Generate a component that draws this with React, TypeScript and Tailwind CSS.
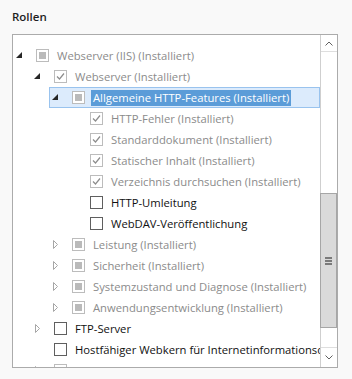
import React from "react";

type Check = "ind" | "checked" | "none";

type Item = {
  label: string;
  level: number;
  expander?: "open" | "closed";
  check: Check;
  installed: boolean;
  selected?: boolean;
};

const items: Item[] = [
  { label: "Webserver (IIS) (Installiert)", level: 0, expander: "open", check: "ind", installed: true },
  { label: "Webserver (Installiert)", level: 1, expander: "open", check: "checked", installed: true },
  { label: "Allgemeine HTTP-Features (Installiert)", level: 2, expander: "open", check: "ind", installed: true, selected: true },
  { label: "HTTP-Fehler (Installiert)", level: 3, check: "checked", installed: true },
  { label: "Standarddokument (Installiert)", level: 3, check: "checked", installed: true },
  { label: "Statischer Inhalt (Installiert)", level: 3, check: "checked", installed: true },
  { label: "Verzeichnis durchsuchen (Installiert)", level: 3, check: "checked", installed: true },
  { label: "HTTP-Umleitung", level: 3, check: "none", installed: false },
  { label: "WebDAV-Veröffentlichung", level: 3, check: "none", installed: false },
  { label: "Leistung (Installiert)", level: 2, expander: "closed", check: "ind", installed: true },
  { label: "Sicherheit (Installiert)", level: 2, expander: "closed", check: "ind", installed: true },
  { label: "Systemzustand und Diagnose (Installiert)", level: 2, expander: "closed", check: "ind", installed: true },
  { label: "Anwendungsentwicklung (Installiert)", level: 2, expander: "closed", check: "ind", installed: true },
  { label: "FTP-Server", level: 1, expander: "closed", check: "none", installed: false },
  { label: "Hostfähiger Webkern für Internetinformationsdienste", level: 1, check: "none", installed: false },
  { label: "Verwaltungsprogramme (Installiert)", level: 1, expander: "closed", check: "ind", installed: true },
];

const indent = ["ml-0", "ml-[18px]", "ml-[36px]", "ml-[54px]"];

const Expander: React.FC<{ kind?: "open" | "closed" }> = ({ kind }) => {
  if (kind === "open") {
    return (
      <svg width="6" height="6" viewBox="0 0 6 6" className="ml-[2px] -mt-[2px]">
        <polygon points="6,0 6,6 0,6" fill="#262626" />
      </svg>
    );
  }
  if (kind === "closed") {
    return (
      <svg width="6" height="9" viewBox="0 0 6 9" className="ml-[3px]">
        <polygon points="0.5,0.5 4.5,4.5 0.5,8.5" fill="none" stroke="#a6a6a6" strokeWidth="1" />
      </svg>
    );
  }
  return null;
};

const CheckBox: React.FC<{ state: Check; installed: boolean }> = ({ state, installed }) => {
  const border = installed ? "border-[#bcbcbc]" : "border-[#5f5f5f]";
  return (
    <div className={`w-[13px] h-[13px] shrink-0 border ${border} bg-white flex items-center justify-center`}>
      {state === "ind" && <div className="w-[7px] h-[7px] bg-[#bababa]" />}
      {state === "checked" && (
        <svg width="11" height="11" viewBox="0 0 11 11">
          <polyline points="2,5.5 4.5,8 9,2.5" fill="none" stroke="#8c8c8c" strokeWidth="1.2" />
        </svg>
      )}
    </div>
  );
};

const Row: React.FC<{ item: Item }> = ({ item }) => {
  const rowCls = item.selected
    ? "border-[#99c3ee] bg-[#dcebfc]"
    : "border-transparent";
  const textCls = item.selected
    ? "bg-[#5b9cd8] text-white"
    : item.installed
    ? "text-[#8b8b8b]"
    : "text-[#111111]";
  return (
    <div className={`h-[21px] flex items-center border ${rowCls} ${indent[item.level]}`}>
      <div className="w-[22px] shrink-0 flex items-center">
        <Expander kind={item.expander} />
      </div>
      <CheckBox state={item.check} installed={item.installed} />
      <span className={`ml-[6px] px-[2px] leading-[16px] whitespace-nowrap ${textCls}`}>
        {item.label}
      </span>
    </div>
  );
};

const ScrollBar: React.FC = () => (
  <div className="w-[17px] shrink-0 flex flex-col border-l border-[#cfcfcf] bg-white">
    <div className="h-[17px] shrink-0 flex items-center justify-center border-b border-[#dedede]">
      <svg width="8" height="5" viewBox="0 0 8 5">
        <polyline points="0.5,4.5 4,1 7.5,4.5" fill="none" stroke="#606060" strokeWidth="1" />
      </svg>
    </div>
    <div className="flex-1 flex flex-col">
      <div className="mt-[141px] h-[135px] -ml-[1px] bg-[#dadada] border border-[#a6a6a6] flex flex-col items-center justify-center gap-[1px]">
        <div className="w-[7px] h-[2px] bg-[#7a7a7a]" />
        <div className="w-[7px] h-[2px] bg-[#7a7a7a]" />
        <div className="w-[7px] h-[2px] bg-[#7a7a7a]" />
      </div>
    </div>
    <div className="h-[20px] shrink-0 flex items-center justify-center border-t border-[#dedede]">
      <svg width="8" height="5" viewBox="0 0 8 5">
        <polyline points="0.5,0.5 4,4 7.5,0.5" fill="none" stroke="#606060" strokeWidth="1" />
      </svg>
    </div>
  </div>
);

export default function App() {
  return (
    <div
      className="w-[352px] h-[379px] bg-[#f9f9f9] pl-[12px] pt-[9px] overflow-hidden"
      style={{ fontFamily: '"Open Sans", "Noto Sans", sans-serif' }}
    >
      <div className="h-[16px] leading-[16px] text-[11.5px] font-semibold text-[#1e1e1e]">Rollen</div>
      <div className="mt-[9px] w-[326px] h-[334px] border border-[#ababab] bg-white flex">
        <div className="flex-1 min-w-0 overflow-hidden pt-[10px] text-[11.25px]">
          {items.map((it) => (
            <Row key={it.label} item={it} />
          ))}
        </div>
        <ScrollBar />
      </div>
    </div>
  );
}
